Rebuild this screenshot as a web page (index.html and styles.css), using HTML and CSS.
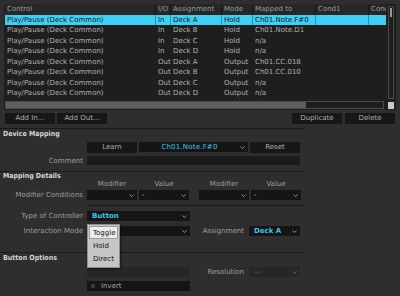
FILE: index.html
```html
<!DOCTYPE html>
<html lang="en">
<head>
    <meta charset="UTF-8">
    <meta name="viewport" content="width=device-width, initial-scale=1.0">
    <title>Controller Mapping</title>
    <link rel="stylesheet" href="styles.css">
</head>
<body>
    <!-- Mapping table -->
    <div class="table-wrap">
        <div class="table-view">
            <div class="trow thead">
                <div>Control</div><div>I/O</div><div>Assignment</div><div>Mode</div><div>Mapped to</div><div>Cond1</div><div>Cond2</div>
            </div>
            <div class="trow selected">
                <div>Play/Pause (Deck Common)</div><div>In</div><div>Deck A</div><div>Hold</div><div>Ch01.Note.F#0</div><div></div><div></div>
            </div>
            <div class="trow">
                <div>Play/Pause (Deck Common)</div><div>In</div><div>Deck B</div><div>Hold</div><div>Ch01.Note.D1</div><div></div><div></div>
            </div>
            <div class="trow">
                <div>Play/Pause (Deck Common)</div><div>In</div><div>Deck C</div><div>Hold</div><div>n/a</div><div></div><div></div>
            </div>
            <div class="trow">
                <div>Play/Pause (Deck Common)</div><div>In</div><div>Deck D</div><div>Hold</div><div>n/a</div><div></div><div></div>
            </div>
            <div class="trow">
                <div>Play/Pause (Deck Common)</div><div>Out</div><div>Deck A</div><div>Output</div><div>Ch01.CC.018</div><div></div><div></div>
            </div>
            <div class="trow">
                <div>Play/Pause (Deck Common)</div><div>Out</div><div>Deck B</div><div>Output</div><div>Ch01.CC.010</div><div></div><div></div>
            </div>
            <div class="trow">
                <div>Play/Pause (Deck Common)</div><div>Out</div><div>Deck C</div><div>Output</div><div>n/a</div><div></div><div></div>
            </div>
            <div class="trow">
                <div>Play/Pause (Deck Common)</div><div>Out</div><div>Deck D</div><div>Output</div><div>n/a</div><div></div><div></div>
            </div>
            <div class="trow">
                <div>Sync (Deck Common)</div><div>In</div><div>Deck A</div><div>Hold</div><div>Ch01.Note.B0</div><div></div><div></div>
            </div>
        </div>
        <div class="vscroll"><div class="vthumb"></div></div>
        <div class="hscroll"><div class="hthumb"></div></div>
        <div class="corner"></div>
    </div>

    <div class="table-actions">
        <div class="btn-group">
            <div class="btn">Add In...</div>
            <div class="btn">Add Out...</div>
        </div>
        <div class="btn-group right">
            <div class="btn">Duplicate</div>
            <div class="btn">Delete</div>
        </div>
    </div>

    <!-- Device Mapping -->
    <div class="section first">
        <div class="section-title">Device Mapping</div>
        <div class="form-row learn-row">
            <div></div>
            <div class="wide learn-group">
                <div class="btn">Learn</div>
                <div class="dropdown centered">
                    <span class="value">Ch01.Note.F#0</span>
                    <svg class="arrow" width="5" height="3" viewBox="0 0 5 3"><path d="M0.5 0.5 L2.5 2.5 L4.5 0.5" fill="none" stroke="currentColor" stroke-width="1"/></svg>
                </div>
                <div class="btn">Reset</div>
            </div>
        </div>
        <div class="form-row comment-row">
            <div class="label">Comment</div>
            <div class="wide input"></div>
        </div>
    </div>

    <!-- Mapping Details -->
    <div class="section second">
        <div class="section-title tight">Mapping Details</div>
        <div class="cond-row cond-labels">
            <div class="label"></div>
            <div class="pair"><div class="col-label">Modifier</div><div class="col-label">Value</div></div>
            <div class="pair"><div class="col-label">Modifier</div><div class="col-label">Value</div></div>
        </div>
        <div class="cond-row">
            <div class="label">Modifier Conditions</div>
            <div class="pair">
                <div class="dropdown">
                    <span class="value"></span>
                    <svg class="arrow" width="5" height="3" viewBox="0 0 5 3"><path d="M0.5 0.5 L2.5 2.5 L4.5 0.5" fill="none" stroke="currentColor" stroke-width="1"/></svg>
                </div>
                <div class="dropdown">
                    <span class="value plain">-</span>
                    <svg class="arrow" width="5" height="3" viewBox="0 0 5 3"><path d="M0.5 0.5 L2.5 2.5 L4.5 0.5" fill="none" stroke="currentColor" stroke-width="1"/></svg>
                </div>
            </div>
            <div class="pair">
                <div class="dropdown">
                    <span class="value"></span>
                    <svg class="arrow" width="5" height="3" viewBox="0 0 5 3"><path d="M0.5 0.5 L2.5 2.5 L4.5 0.5" fill="none" stroke="currentColor" stroke-width="1"/></svg>
                </div>
                <div class="dropdown">
                    <span class="value plain">-</span>
                    <svg class="arrow" width="5" height="3" viewBox="0 0 5 3"><path d="M0.5 0.5 L2.5 2.5 L4.5 0.5" fill="none" stroke="currentColor" stroke-width="1"/></svg>
                </div>
            </div>
        </div>
        <div class="sub-divider"></div>
        <div class="form-row type-row">
            <div class="label">Type of Controller</div>
            <div class="dropdown">
                <span class="value">Button</span>
                <svg class="arrow" width="5" height="3" viewBox="0 0 5 3"><path d="M0.5 0.5 L2.5 2.5 L4.5 0.5" fill="none" stroke="currentColor" stroke-width="1"/></svg>
            </div>
        </div>
        <div class="form-row mode-row">
            <div class="label">Interaction Mode</div>
            <div class="dropdown">
                <span class="value"></span>
                <svg class="arrow" width="5" height="3" viewBox="0 0 5 3"><path d="M0.5 0.5 L2.5 2.5 L4.5 0.5" fill="none" stroke="currentColor" stroke-width="1"/></svg>
                <!-- open menu -->
                <div class="popup">
                    <div class="popup-item active">Toggle</div>
                    <div class="popup-item">Hold</div>
                    <div class="popup-item">Direct</div>
                </div>
            </div>
            <div class="label label-2">Assignment</div>
            <div class="dropdown">
                <span class="value">Deck A</span>
                <svg class="arrow" width="5" height="3" viewBox="0 0 5 3"><path d="M0.5 0.5 L2.5 2.5 L4.5 0.5" fill="none" stroke="currentColor" stroke-width="1"/></svg>
            </div>
        </div>
    </div>

    <!-- Button Options -->
    <div class="section third">
        <div class="section-title wide-title">Button Options</div>
        <div class="form-row res-row">
            <div></div>
            <div class="disabled-box"></div>
            <div class="label label-2">Resolution</div>
            <div class="dropdown disabled">
                <span class="value">---</span>
                <svg class="arrow" width="5" height="3" viewBox="0 0 5 3"><path d="M0.5 0.5 L2.5 2.5 L4.5 0.5" fill="none" stroke="currentColor" stroke-width="1"/></svg>
            </div>
        </div>
        <div class="form-row invert-row">
            <div></div>
            <div class="checkbox-field">
                <span class="checkbox"></span>
                <span>Invert</span>
            </div>
        </div>
    </div>
</body>
</html>
```

FILE: styles.css
```css
* {
    box-sizing: border-box;
}

body {
    margin: 0;
    width: 400px;
    height: 296px;
    overflow: hidden;
    background-color: #2e2e2e;
    color: #a4a4a4;
    font-family: 'DejaVu Sans', sans-serif;
    font-size: 7px;
}

/* Table */
.table-wrap {
    margin: 4px 4px 0 4px;
    display: grid;
    grid-template-columns: 381px 8px;
    grid-template-rows: 96px 8px;
    gap: 1px;
    padding: 0 1px 1px 1px;
    background-color: #1e1e1e;
}

.table-view {
    overflow: hidden;
}

.trow {
    display: grid;
    grid-template-columns: 151px 15px 51px 31px 63px 53px 30px;
    height: 10.43px;
    line-height: 10.43px;
    white-space: nowrap;
    color: #b0b0b0;
}

.trow > div {
    padding-left: 2px;
    overflow: hidden;
}

.thead {
    height: 11px;
    line-height: 11px;
    background-color: #272727;
    color: #9c9c9c;
}

.thead > div {
    border-right: 1px solid #171717;
}

.selected {
    background-color: #3fcff4;
    color: #0c1a24;
}

.selected > div {
    border-right: 1px solid rgba(0, 0, 0, 0.3);
}

.vscroll {
    margin: 2px 1px 1px 1px;
    border: 1px solid #4a4a4a;
    padding: 1px;
}

.vthumb {
    height: 9px;
    background-color: #9a9a9a;
}

.hscroll {
    border: 1px solid #4a4a4a;
    margin-right: 2px;
}

.hthumb {
    width: 300px;
    height: 100%;
    background-color: #5e5e5e;
}

.corner {
    margin: 1px 1px 0 1px;
    background-color: #c8c8c8;
}

.table-actions {
    display: flex;
    justify-content: space-between;
    margin: 3px 5px 0 5px;
}

.btn-group {
    display: flex;
    gap: 2px;
}

.btn-group.right {
    gap: 3px;
}

.btn {
    width: 50px;
    height: 11px;
    line-height: 11px;
    text-align: center;
    background-color: #171717;
    color: #aeaeae;
}

/* Sections */
.section {
    width: 305px;
    border-top: 1px solid #1b1b1b;
}

.section.first {
    margin-top: 4px;
}

.section.second {
    margin-top: 6px;
}

.section.third {
    margin-top: 16px;
}

.section-title {
    padding-left: 3px;
    height: 10px;
    line-height: 10px;
    font-weight: bold;
    font-stretch: condensed;
    color: #d6d6d6;
}

.section-title.tight {
    height: 9px;
    line-height: 9px;
}

.section-title.wide-title {
    height: 11px;
    line-height: 11px;
}

.form-row {
    display: grid;
    grid-template-columns: 87px 103px 59px 51px;
    height: 10px;
    align-items: center;
}

.label {
    text-align: right;
    padding-right: 4px;
    white-space: nowrap;
    color: #9e9e9e;
}

.label-2 {
    padding-right: 5px;
}

.wide {
    grid-column: 2 / 5;
    height: 10px;
}

.learn-row {
    margin-top: 3px;
}

.learn-group {
    display: flex;
    gap: 2px;
}

.comment-row {
    margin-top: 4px;
    height: 9px;
}

.input {
    height: 9px;
    background-color: #1b1b1b;
}

.dropdown {
    position: relative;
    display: flex;
    align-items: center;
    height: 10px;
    padding: 0 3px 0 5px;
    background-color: #151515;
    color: #3fc4ef;
}

.dropdown .value {
    flex: 1;
    font-weight: bold;
    white-space: nowrap;
}

.dropdown .value.plain {
    font-weight: normal;
    color: #c0c0c0;
}

.dropdown .arrow {
    color: #4aa9cf;
    flex: none;
}

.dropdown.centered {
    flex: 1;
    padding-left: 0;
}

.dropdown.centered .value {
    text-align: center;
    font-weight: normal;
    letter-spacing: 0.2px;
}

/* Modifier conditions */
.cond-row {
    display: flex;
    height: 10px;
    align-items: center;
    margin-top: 3px;
}

.cond-row .label {
    width: 87px;
}

.cond-labels {
    margin-top: -1px;
    height: 7px;
}

.pair {
    display: flex;
    gap: 2px;
}

.pair + .pair {
    margin-left: 10px;
}

.pair .dropdown {
    width: 50px;
    padding-left: 3px;
}

.col-label {
    width: 50px;
    text-align: center;
    color: #9e9e9e;
}

.sub-divider {
    margin: 5px 0 0 88px;
    border-top: 1px solid #1b1b1b;
}

.type-row {
    margin-top: 5px;
}

.mode-row {
    margin-top: 5px;
}

/* Open interaction mode menu */
.popup {
    position: absolute;
    top: -2px;
    left: 0;
    width: 33px;
    padding: 1px 1px 2px 1px;
    background-color: #c6c6c6;
    border: 1px solid #8e8e8e;
    box-shadow: 1px 1px 2px rgba(0, 0, 0, 0.5);
    color: #111;
}

.popup-item {
    height: 13px;
    line-height: 13px;
    padding-left: 3px;
    border: 1px solid transparent;
}

.popup-item.active {
    background-color: #ededed;
    border-color: #9c9c9c;
}

.res-row {
    margin-top: 3px;
}

.disabled-box {
    height: 10px;
    background-color: #272727;
}

.dropdown.disabled {
    background-color: #272727;
}

.dropdown.disabled .value {
    font-weight: normal;
    color: #4b88a4;
}

.dropdown.disabled .arrow {
    color: #3f6f84;
}

.invert-row {
    margin-top: 4px;
}

.checkbox-field {
    display: flex;
    align-items: center;
    gap: 6px;
    height: 10px;
    padding-left: 4px;
    background-color: #151515;
    color: #a0a0a0;
}

.checkbox {
    width: 4px;
    height: 4px;
    background-color: #3a3a3a;
}
```
